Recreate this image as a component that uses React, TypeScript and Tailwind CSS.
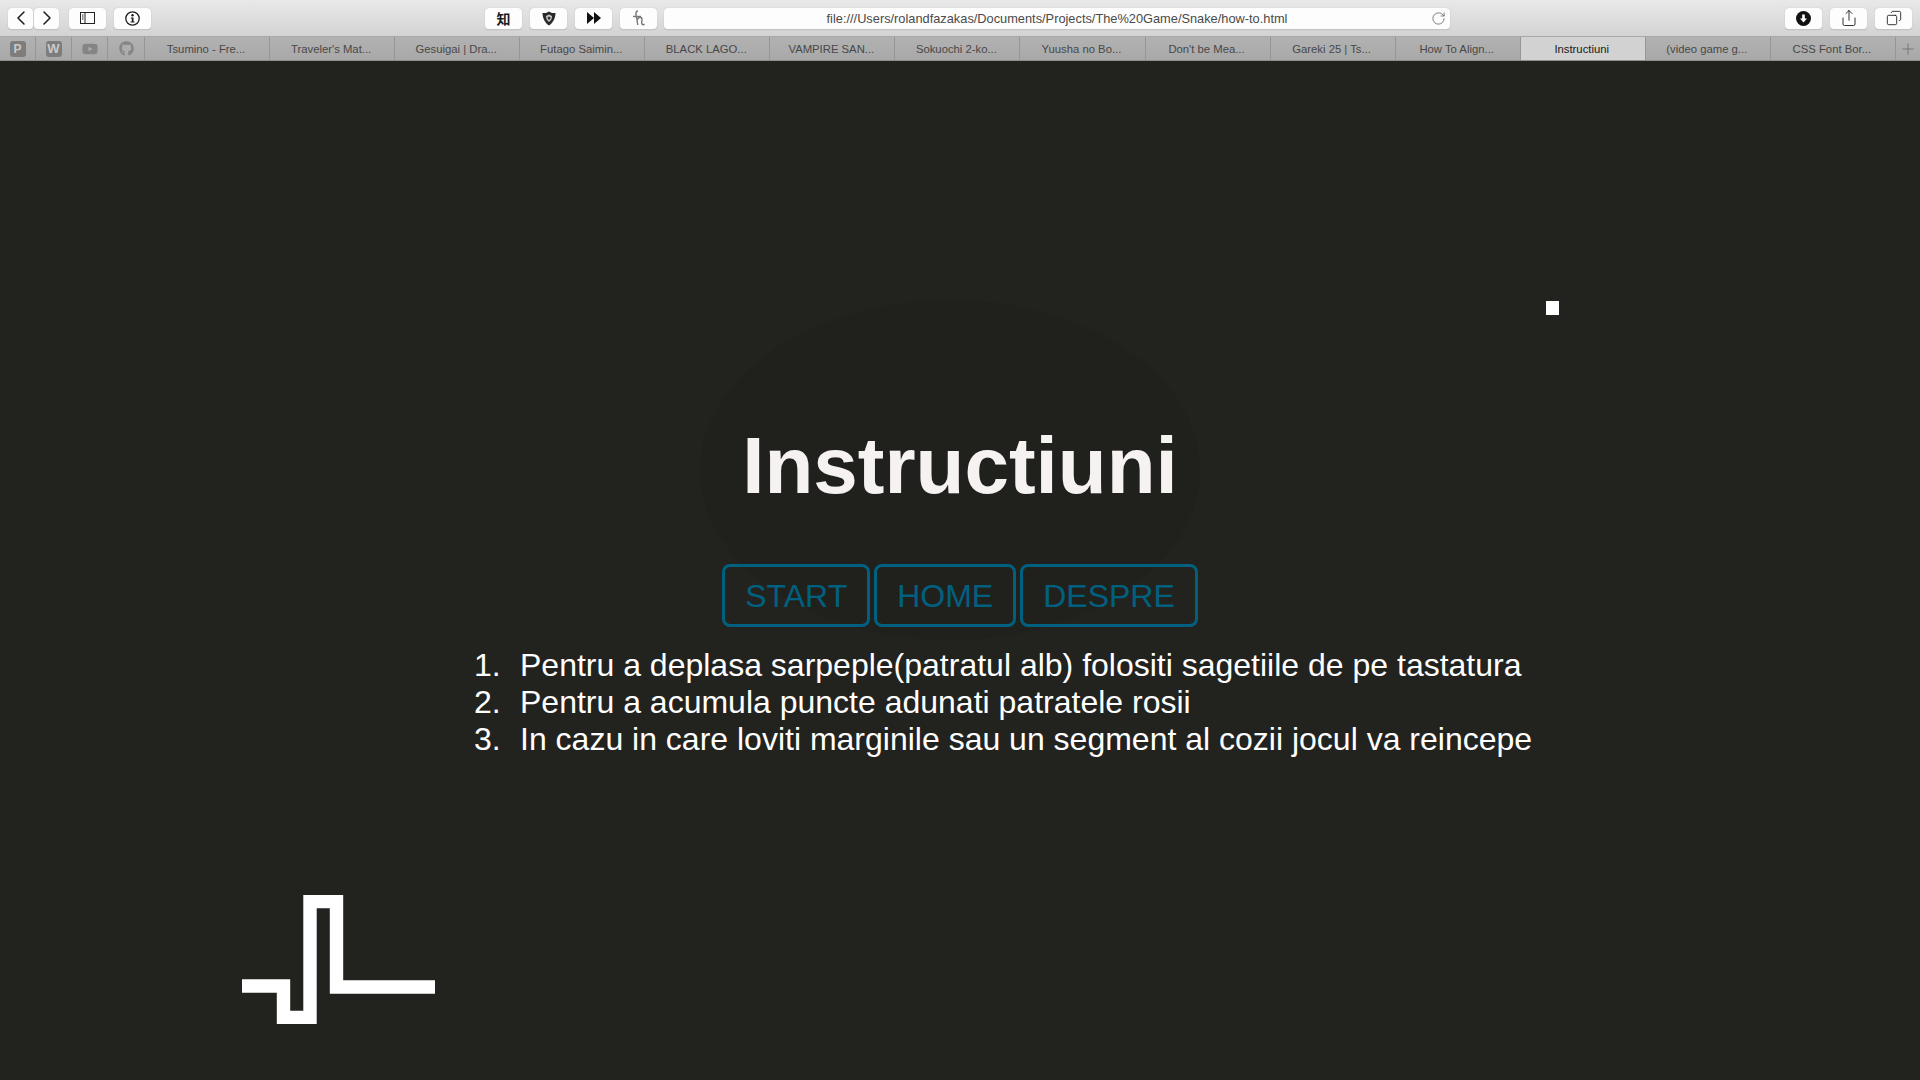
import { ChevronLeft, ChevronRight, RotateCw, Plus, Share, Copy } from 'lucide-react';
import { FaGithub, FaYoutube } from 'react-icons/fa';

const tabs = [
  'Tsumino - Fre...',
  "Traveler's Mat...",
  'Gesuigai | Dra...',
  'Futago Saimin...',
  'BLACK LAGO...',
  'VAMPIRE SAN...',
  'Sokuochi 2-ko...',
  'Yuusha no Bo...',
  "Don't be Mea...",
  'Gareki 25 | Ts...',
  'How To Align...',
  'Instructiuni',
  '(video game g...',
  'CSS Font Bor...',
];

const steps = [
  'Pentru a deplasa sarpeple(patratul alb) folositi sagetiile de pe tastatura',
  'Pentru a acumula puncte adunati patratele rosii',
  'In cazu in care loviti marginile sau un segment al cozii jocul va reincepe',
];

const ToolButton = ({ className = 'w-[37px]', children }: { className?: string; children: React.ReactNode }) => (
  <div className={`h-[22px] rounded-[4px] bg-[#fdfdfd] border-b border-[#c4c4c4] shadow-[0_0_1px_rgba(0,0,0,0.25)] flex items-center justify-center text-[#1c1c1c] ${className}`}>
    {children}
  </div>
);

const PinnedTab = ({ className = 'w-9', children }: { className?: string; children: React.ReactNode }) => (
  <div className={`h-full border-r border-[#969696] flex items-center justify-center shrink-0 ${className}`}>{children}</div>
);

export default function App() {
  return (
    <div className="relative h-[1080px] w-[1920px] overflow-hidden bg-[#22231f] font-['Liberation_Sans',Arial,sans-serif]">
      {/* Browser chrome */}
      <div className="h-[37px] flex items-center pt-[1px] bg-gradient-to-b from-[#e9e9e9] to-[#d3d3d3] border-b border-[#a8a8a8]">
        <div className="ml-2 flex gap-px">
          <ToolButton className="w-[25px]"><ChevronLeft size={24} strokeWidth={1.5} /></ToolButton>
          <ToolButton className="w-[25px]"><ChevronRight size={24} strokeWidth={1.5} /></ToolButton>
        </div>
        <ToolButton className="ml-[10px] w-[37px]">
          <svg width="15" height="12" viewBox="0 0 15 12" fill="none" stroke="#222">
            <rect x="0.5" y="0.5" width="14" height="11" />
            <path d="M5 0.5V11.5" />
            <path d="M2 3H3.5M2 5H3.5M2 7H3.5" />
          </svg>
        </ToolButton>
        <ToolButton className="ml-2 w-[37px]">
          <svg width="15" height="15" viewBox="0 0 15 15" fill="none">
            <circle cx="7.5" cy="7.5" r="6.7" stroke="#1c1c1c" strokeWidth="1.3" />
            <circle cx="7.5" cy="4.3" r="1.2" fill="#1c1c1c" />
            <path d="M5.8 6.4 H8.5 V10.4 H9.6 V11.5 H5.6 V10.4 H6.8 V7.5 H5.8 Z" fill="#1c1c1c" />
          </svg>
        </ToolButton>

        <ToolButton className="ml-[334px] w-[37px] text-[14px] font-bold font-['Noto_Sans_CJK_JP',sans-serif]">知</ToolButton>
        <ToolButton className="ml-2 w-[37px]">
          <svg width="14" height="15" viewBox="0 0 14 15">
            <path d="M7 0.5 L10 2 L13.5 2 C13.5 7 11 12 7 14.5 C3 12 0.5 7 0.5 2 L4 2 Z" fill="#2a2a2a" />
            <path d="M7 3.5 L10 5 C10 7.5 9 9.5 7 11 C5 9.5 4 7.5 4 5 Z" fill="#c9c9c9" />
            <path d="M7 5.5 L8.5 6.2 C8.5 7.4 8 8.3 7 9 C6 8.3 5.5 7.4 5.5 6.2 Z" fill="#333" />
          </svg>
        </ToolButton>
        <ToolButton className="ml-2 w-[37px]">
          <svg width="14" height="12" viewBox="0 0 14 12" fill="#111">
            <path d="M0 0 L7 6 L0 12 Z" />
            <path d="M7 0 L14 6 L7 12 Z" />
          </svg>
        </ToolButton>
        <ToolButton className="ml-2 w-[37px]">
          <svg width="13" height="16" viewBox="0 0 13 16" fill="none" stroke="#777" strokeWidth="1.4">
            <path d="M6 1 C3.5 1 3.5 4 4.5 7 L5.8 15 M5.4 9.5 C6.5 6.5 10 6.5 10 9.5 C10 11.5 9.3 12 9.8 13.5 C10.3 15 11.5 15 12.5 14" />
            <path d="M1 6.5 H9" />
          </svg>
        </ToolButton>

        <div className="ml-[7px] w-[786px] h-[22px] rounded-[4px] bg-[#fdfdfd] border-b border-[#c4c4c4] shadow-[0_0_1px_rgba(0,0,0,0.25)] flex items-center relative">
          <span className="flex-1 pt-[1px] text-center text-[12.8px] text-[#4a4a4a]">file:///Users/rolandfazakas/Documents/Projects/The%20Game/Snake/how-to.html</span>
          <RotateCw size={15} strokeWidth={1.2} className="absolute right-[4px] text-[#555]" />
        </div>

        <ToolButton className="ml-[335px] w-[37px]">
          <svg width="15" height="15" viewBox="0 0 15 15">
            <circle cx="7.5" cy="7.5" r="7.5" fill="#111" />
            <path d="M6.2 3.5 H8.8 V7.5 H11 L7.5 11.5 L4 7.5 H6.2 Z" fill="#fff" />
          </svg>
        </ToolButton>
        <ToolButton className="ml-2 w-[37px]"><Share size={18} strokeWidth={1.2} /></ToolButton>
        <ToolButton className="ml-2 w-[37px]"><Copy size={16} strokeWidth={1.3} className="-scale-x-100" /></ToolButton>
      </div>

      {/* Tab bar */}
      <div className="h-6 flex bg-gradient-to-b from-[#b2b2b2] to-[#a8a8a8] border-b border-[#8f8f8f]">
        <PinnedTab>
          <div className="w-4 h-4 rounded-[3px] bg-[#7d7d7d] text-[#c9c9c9] text-[12px] font-bold flex items-center justify-center">P</div>
        </PinnedTab>
        <PinnedTab>
          <div className="w-4 h-4 rounded-[3px] bg-[#7d7d7d] text-[#c9c9c9] text-[13px] font-bold flex items-center justify-center">W</div>
        </PinnedTab>
        <PinnedTab><FaYoutube size={16} color="#858585" /></PinnedTab>
        <PinnedTab className="w-[37px]"><FaGithub size={15} color="#858585" /></PinnedTab>
        {tabs.map(t => (
          <div
            key={t}
            className={`w-[125.07px] shrink-0 h-full border-r border-[#969696] flex items-center justify-center text-[11.3px] pt-[1px] pr-[2px] ${
              t === 'Instructiuni' ? 'bg-[#d2d2d2] text-[#1a1a1a]' : 'text-[#484848]'
            }`}
          >
            {t}
          </div>
        ))}
        <div className="flex-1 flex items-center justify-center text-[#666]">
          <Plus size={18} strokeWidth={1} />
        </div>
      </div>

      {/* Page */}
      <div className="relative flex flex-col items-center">
        <div className="absolute left-[700px] top-[239px] w-[500px] h-[340px] rounded-[50%] bg-[#20211d]" />
        <h1 className="relative mt-[359px] text-[80px] leading-[92px] font-bold text-[#f7f2f2]">Instructiuni</h1>
        <div className="relative mt-[52px] flex gap-1">
          {['START', 'HOME', 'DESPRE'].map(l => (
            <button key={l} className="h-[63px] px-[20px] border-[3px] border-[#00607f] rounded-[8px] text-[32px] text-[#00607f]">
              {l}
            </button>
          ))}
        </div>
        <ol className="relative mt-[20px] self-start ml-[474px] text-[32px] leading-[37px] text-white">
          {steps.map((s, i) => (
            <li key={s} className="flex">
              <span className="w-[46px] shrink-0">{i + 1}.</span>
              {s}
            </li>
          ))}
        </ol>
      </div>

      {/* Game pieces */}
      <div className="absolute left-[1546px] top-[301px] w-[13px] h-[14px] bg-white" />
      <svg className="absolute left-[242px] top-[895px]" width="194" height="129" viewBox="0 0 194 129" fill="none">
        <path d="M0 91 H41.5 V122.5 H68 V6.5 H94.5 V92 H193" stroke="#fff" strokeWidth="13.4" />
      </svg>
    </div>
  );
}
